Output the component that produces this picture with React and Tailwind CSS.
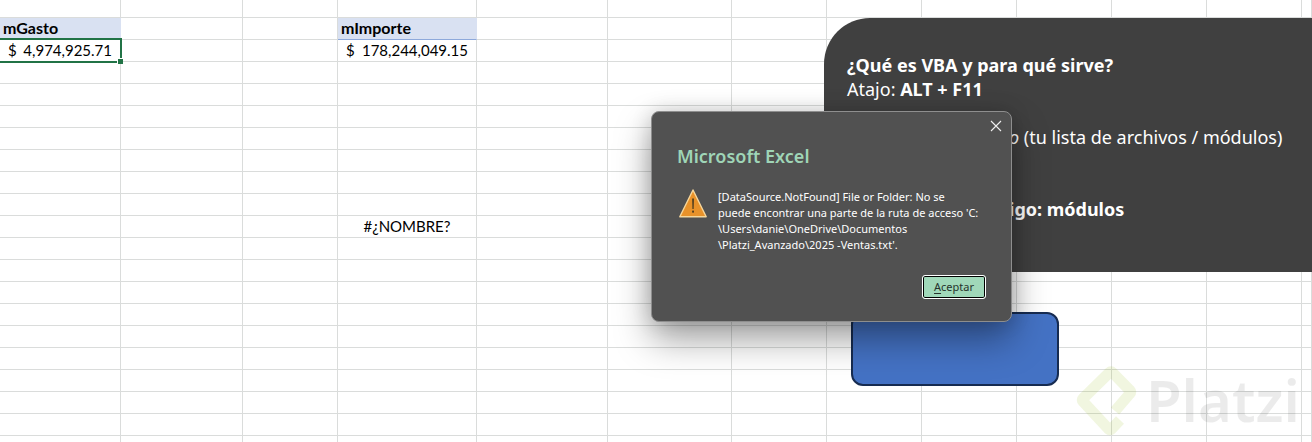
const columns = [
  'w-[121px]',
  'w-[122px]',
  'w-[95px]',
  'w-[139px]',
  'w-[131px]',
  'w-[124px]',
  'w-[95px]',
  'w-[95px]',
  'w-[95px]',
  'w-[95px]',
  'w-[95px]',
  'w-[95px]',
  '',
];

const rowCount = 21;

const cells = {
  '1:0': { kind: 'header', text: 'mGasto' },
  '1:3': { kind: 'header', text: 'mImporte', underline: true },
  '2:0': { kind: 'amount', text: '4,974,925.71', selected: true },
  '2:3': { kind: 'amount', text: '178,244,049.15' },
  '10:3': { kind: 'error', text: '#¿NOMBRE?' },
};

function Cell({ cell }) {
  const base = 'relative border-r border-b p-0 pb-px';
  if (!cell) return <td className={`${base} border-[#dadcdb]`} />;
  if (cell.kind === 'header') {
    return (
      <th
        scope="col"
        className={`${base} bg-[#d9e1f2] pl-[3px] text-left text-base leading-5 font-bold ${
          cell.underline ? 'border-r-[#d9e1f2] border-b-[#8ea9db]' : 'border-[#d9e1f2]'
        }`}
      >
        {cell.text}
      </th>
    );
  }
  if (cell.kind === 'amount') {
    return (
      <td className={`${base} border-[#dadcdb]`}>
        <div className="flex justify-between pr-2 pl-2">
          <span>$</span>
          <span>{cell.text}</span>
        </div>
        {cell.selected && (
          <div className="absolute -top-0.5 -right-0.5 -bottom-0.5 -left-1 z-10 border-2 border-[#217346]">
            <span className="absolute -right-[3px] -bottom-[3px] size-1.5 border-t border-l border-white bg-[#217346]" />
          </div>
        )}
      </td>
    );
  }
  return <td className={`${base} border-[#dadcdb] text-center`}>{cell.text}</td>;
}

function Sheet() {
  return (
    <table className="w-full table-fixed border-separate border-spacing-0 font-['Lato',sans-serif] text-[15px] leading-5 text-black">
      <colgroup>
        {columns.map((width, i) => (
          <col key={i} className={width} />
        ))}
      </colgroup>
      <tbody>
        {Array.from({ length: rowCount }, (_, r) => (
          <tr key={r} className={r === 0 ? 'h-[18px]' : 'h-[22px]'}>
            {columns.map((_, c) => (
              <Cell key={c} cell={cells[`${r}:${c}`]} />
            ))}
          </tr>
        ))}
      </tbody>
    </table>
  );
}

function NotesShape() {
  return (
    <section className="absolute top-[18px] right-0 left-[824px] h-[254px] overflow-hidden rounded-tl-[46px] bg-[#404040] pt-[35px] pl-[23px] font-['Noto_Sans',sans-serif] text-lg leading-6 whitespace-nowrap text-white">
      <p className="font-bold">¿Qué es VBA y para qué sirve?</p>
      <p>
        Atajo: <strong>ALT + F11</strong>
      </p>
      <div className="mt-6 pl-[162px]">
        <p>
          <em>o</em> (tu lista de archivos / módulos)
        </p>
        <p className="mt-12 font-bold">igo: módulos</p>
      </div>
    </section>
  );
}

function WarningIcon() {
  return (
    <svg viewBox="0 0 28 29" className="h-[29px] w-7 shrink-0" aria-hidden="true">
      <path d="M14 1 L27.2 27.7 H0.8 Z" fill="#e8922a" stroke="#f6d79c" strokeWidth="1.4" strokeLinejoin="round" />
      <path d="M13.1 9.500 H15 L14.7 20 H13.4 Z" fill="#54401f" />
      <rect x="13.1" y="21.6" width="1.9" height="2" fill="#54401f" />
    </svg>
  );
}

function Dialog() {
  return (
    <div
      role="dialog"
      aria-labelledby="dialog-title"
      className="absolute top-[111px] left-[651px] w-[361px] rounded-lg border border-[#8e8e8e] bg-[#515151] px-[25px] pb-[22px] font-['Noto_Sans',sans-serif] text-white shadow-[0_18px_36px_rgba(0,0,0,0.36),0_0_20px_rgba(0,0,0,0.16)]"
    >
      <div className="-mr-[18px] flex h-7 items-center justify-end">
        <button type="button" aria-label="Cerrar" className="flex size-4 items-center justify-center">
          <svg viewBox="0 0 12 12" className="size-3" fill="none" stroke="#f0f0f0" strokeWidth="1.1">
            <path d="M1 1 L11 11 M11 1 L1 11" />
          </svg>
        </button>
      </div>
      <h1 id="dialog-title" className="mt-1 text-lg leading-6 font-semibold text-[#9fd5b7]">
        Microsoft Excel
      </h1>
      <div className="mt-[21px] flex gap-[11px] pl-0.5">
        <WarningIcon />
        <p className="text-[11px] leading-4 whitespace-nowrap">
          [DataSource.NotFound] File or Folder: No se
          <br />
          puede encontrar una parte de la ruta de acceso 'C:
          <br />
          \Users\danie\OneDrive\Documentos
          <br />
          \Platzi_Avanzado\2025 -Ventas.txt'.
        </p>
      </div>
      <div className="mt-[22px] flex justify-end">
        <button
          type="button"
          className="h-6 w-16 rounded-[3px] border border-white bg-[#a0d8b9] text-[11px] text-[#26332c] shadow-[inset_0_0_0_1px_#000]"
        >
          <span className="underline underline-offset-2">A</span>ceptar
        </button>
      </div>
    </div>
  );
}

function Watermark() {
  return (
    <div className="absolute right-3 bottom-[3px] flex items-center gap-2">
      <svg viewBox="0 0 62 74" className="h-[74px] w-[62px]" fill="none" aria-hidden="true">
        <path
          d="M39 46 L54 28.500 Q55.500 27 54 25.500 L36.500 7.500 Q35 6 33.500 7.500 L7 33.500 Q5.500 35 7 36.500 L32.500 64 Q34 65.500 35.500 64 L44 55"
          stroke="#8ab800"
          strokeOpacity="0.12"
          strokeWidth="11"
          strokeLinejoin="round"
        />
      </svg>
      <span className="pb-1 font-['Noto_Sans',sans-serif] text-[58px] leading-[68px] font-semibold text-black/8">Platzi</span>
    </div>
  );
}

export default function App() {
  return (
    <main className="relative h-screen overflow-hidden bg-white">
      <Sheet />
      <NotesShape />
      <div className="absolute top-[312px] left-[851px] h-[74px] w-[208px] rounded-xl border-2 border-[#172c51] bg-[#4472c4]" />
      <Watermark />
      <Dialog />
    </main>
  );
}
